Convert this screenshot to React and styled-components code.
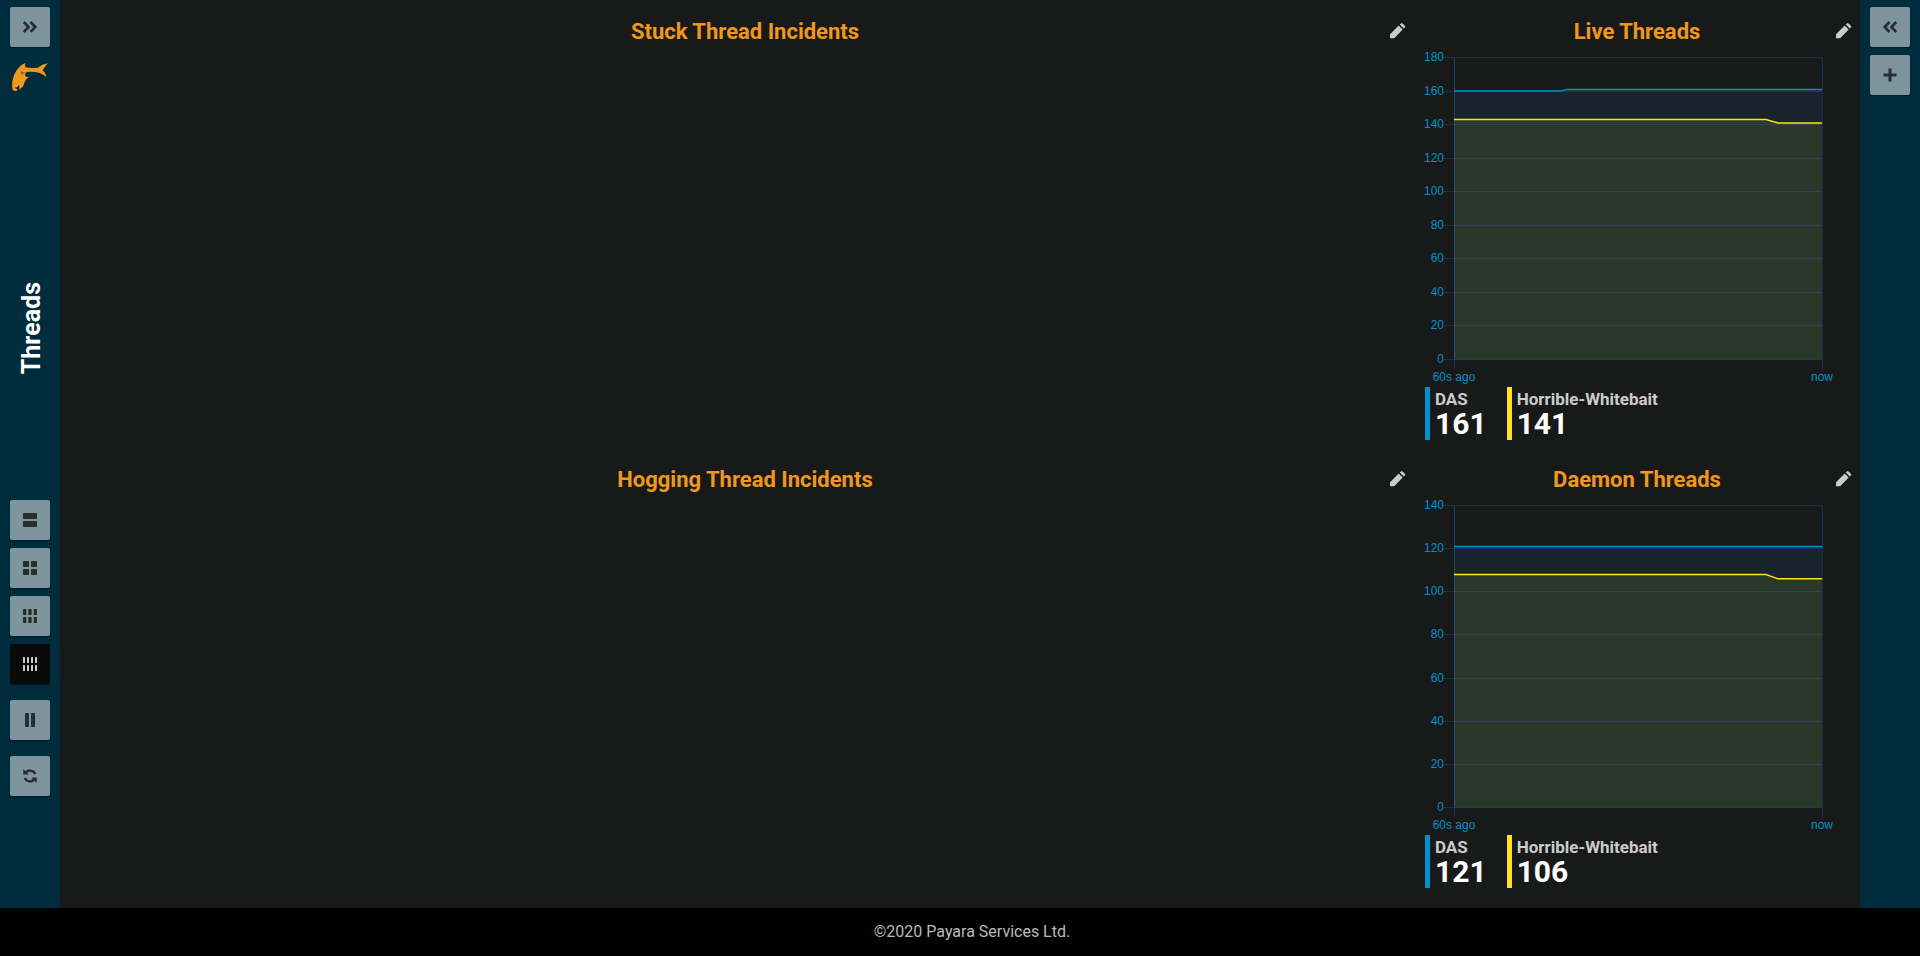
import React from 'react';
import styled, { createGlobalStyle } from 'styled-components';
import { FaAngleDoubleLeft, FaAngleDoubleRight } from 'react-icons/fa';

const Global = createGlobalStyle`
  *, *::before, *::after { box-sizing: border-box; }
  body { margin: 0; background: #000; font-family: Roboto, "Liberation Sans", sans-serif; }
`;

const Page = styled.div`
  display: flex;
  flex-direction: column;
  min-height: 100vh;
  background: #181a19;
`;

const Body = styled.div`
  flex: 1;
  display: flex;
  align-items: stretch;
`;

const Sidebar = styled.nav`
  flex: 0 0 60px;
  display: flex;
  flex-direction: column;
  align-items: center;
  gap: 8px;
  padding: 7px 0 112px;
  background: #002c3e;
`;

const Group = styled.div`
  display: flex;
  flex-direction: column;
  gap: 8px;
  margin-bottom: 8px;

  &:last-child { margin-bottom: 0; }
`;

const ToolButton = styled.button`
  display: flex;
  align-items: center;
  justify-content: center;
  width: 40px;
  height: 40px;
  padding: 0;
  border: 0;
  border-radius: 2px;
  color: ${(p) => (p.$active ? '#c8cccc' : '#272e30')};
  background: ${(p) => (p.$active ? '#090909' : '#7f959e')};
  box-shadow: 0 1px 1px rgba(0, 0, 0, 0.35);
  cursor: pointer;
`;

const Logo = styled.a`
  display: flex;
  justify-content: center;
  width: 40px;
  height: 40px;
  padding-top: 8px;
`;

const PageTitle = styled.h1`
  flex: 1;
  display: flex;
  align-items: center;
  justify-content: center;
  margin: 0;
  padding: 61px 0 0 3px;
  font-size: 25px;
  line-height: 30px;
  font-weight: 700;
  color: #fff;

  span { writing-mode: vertical-rl; transform: rotate(180deg); }
`;

const Board = styled.main`
  flex: 1;
  display: grid;
  grid-template-columns: 3fr 1fr;
  grid-template-rows: repeat(2, 1fr);
  padding: 0 0 12px 16px;
`;

const Widget = styled.section`
  display: flex;
  flex-direction: column;
  min-width: 0;
`;

const WidgetHeader = styled.header`
  display: grid;
  grid-template-columns: 24px 1fr 24px;
  align-items: center;
  height: 48px;
  padding-top: 16px;
`;

const WidgetTitle = styled.h2`
  grid-column: 2;
  margin: 0;
  text-align: center;
  font-size: 22px;
  line-height: 28px;
  font-weight: 700;
  color: #f0981b;
`;

const EditButton = styled.button`
  display: flex;
  width: 16px;
  height: 28px;
  padding: 5px 0 0;
  border: 0;
  color: #c9cbca;
  background: none;
  cursor: pointer;
`;

const Plot = styled.svg`
  display: block;
  width: 100%;
  font-family: "Liberation Sans", Arial, sans-serif;
  font-size: 12px;
  fill: #0090cd;
`;

const Legend = styled.ul`
  display: flex;
  gap: 20px;
  margin: 0;
  padding: 0 11px;
  list-style: none;
`;

const LegendItem = styled.li`
  padding: 0 0 0 5px;
  height: 53px;
  border-left: 5px solid ${(p) => p.$color};
`;

const SeriesName = styled.div`
  padding-top: 2px;
  font-size: 17px;
  line-height: 20px;
  font-weight: 700;
  color: #ccc;
`;

const SeriesValue = styled.div`
  font-size: 30px;
  line-height: 30px;
  font-weight: 700;
  color: #fff;
`;

const Footer = styled.footer`
  display: flex;
  align-items: center;
  justify-content: center;
  height: 48px;
  padding-left: 24px;
  font-size: 16px;
  line-height: 24px;
  color: #b9bbbb;
  background: #000;
`;

const BLUE = '#0090cd';
const YELLOW = '#ffe11c';

const LayoutIcon = ({ columns }) => {
  const gap = 2;
  const width = (14 - gap * (columns - 1)) / columns;
  return (
    <svg width="14" height="14" fill="currentColor" aria-hidden="true">
      {[0, 8].map((y) =>
        Array.from({ length: columns }, (_, i) => (
          <rect key={`${y}-${i}`} x={i * (width + gap)} y={y} width={width} height="6" rx="0.5" />
        ))
      )}
    </svg>
  );
};

const PauseIcon = () => (
  <svg width="14" height="14" fill="currentColor" aria-hidden="true">
    <path d="M2 0h4v14H2zM8 0h4v14H8z" />
  </svg>
);

const PlusIcon = () => (
  <svg width="14" height="14" fill="currentColor" aria-hidden="true">
    <path d="M5.5 .5h3v5h5v3h-5v5h-3v-5h-5v-3h5z" />
  </svg>
);

const RefreshIcon = () => (
  <svg width="14" height="14" viewBox="0 0 14 14" aria-hidden="true">
    <g fill="none" stroke="currentColor" strokeWidth="2.400">
      <path d="M2.600 4C4.600 .9 9.800.3 12.400 5" />
      <path d="M11.400 10C9.400 13.100 4.200 13.700 1.600 9" />
    </g>
    <path fill="currentColor" d="M.3 0v5.600h5.400zM13.700 14V8.400H8.300z" />
  </svg>
);

const PencilIcon = () => (
  <svg width="16" height="16" viewBox="0 0 16 16" fill="currentColor" aria-hidden="true">
    <path d="M0 11.300 8.700 2.600l4 4L4.200 15.300H0zM9.800 1.500 10.900.4q.8-.7 1.600 0l2.400 2.400q.7.800 0 1.600l-1.100 1.100z" />
  </svg>
);

const FishLogo = () => (
  <svg width="36" height="28" viewBox="0 0 36 28" fill="#f0981b" aria-hidden="true">
    <path d="M13.500 0C9.500 1.500 6.500 4.300 4.500 7.500 2 11 .6 15.500.2 20c-.2 2.700 0 5 .6 7l2.200 1c1.300 0 2.200-.5 2.600-1.500l-3-1.700 2.600-.6c1-.4 1.300-1.200 1.100-2.400 1.400 1.300 1.500 2.900.8 4.600 2.600-1 4.200-3 5-5.700.900-3.200 2.700-5.600 5.400-7l-1.800.4c-2 0-3-1.500-2.400-3.300.3-1 1-1.500 2.200-1.700 3.700-.7 7.300-.6 10.500.3 3.200.9 5.600 2.600 8.300 4.300-.3-2.700-1.500-4.700-3.700-6.300C31.800 5 33.700 2.700 36 .2c-4.200.6-7.700 2.200-10.200 4.500-3.700.5-7.600.2-12-.1-.9-1.400-.9-3-.3-4.600z" />
    <path d="M9 8.500l4 .8-2 2.300-1.800-.5z" fill="#75592a" />
    <circle cx="11" cy="10" r=".7" fill="#f0981b" />
  </svg>
);

const LEFT = 40;
const RIGHT = 408;
const TOP = 9.5;
const BOTTOM = 311.5;

function Chart({ max, series, label }) {
  const y = (v) => BOTTOM - (v / max) * (BOTTOM - TOP);
  const ticks = Array.from({ length: max / 20 + 1 }, (_, i) => i * 20);
  const points = (data) => data.map(([x, v]) => `${x},${y(v)}`).join(' ');
  return (
    <Plot viewBox="0 0 446 339" role="img" aria-label={label}>
      {series.map((s, i) => (
        <polygon
          key={s.name}
          points={`${LEFT},${BOTTOM} ${points(s.data)} ${RIGHT},${BOTTOM}`}
          fill={i === 0 ? '#17242b' : '#2b372b'}
        />
      ))}
      <g shapeRendering="crispEdges" stroke="#1c74d8" strokeOpacity="0.25">
        {ticks.map((t) => (
          <line key={t} x1={LEFT - 10} x2={RIGHT} y1={Math.floor(y(t)) + 0.5} y2={Math.floor(y(t)) + 0.5} />
        ))}
        <line x1={LEFT + 0.5} x2={LEFT + 0.5} y1={TOP} y2={BOTTOM + 10} />
        <line x1={LEFT + 0.5} x2={LEFT + 0.5} y1={TOP} y2={BOTTOM} />
        <line x1={RIGHT + 0.5} x2={RIGHT + 0.5} y1={TOP} y2={BOTTOM + 10} />
      </g>
      {series.map((s) => (
        <polyline key={s.name} points={points(s.data)} fill="none" stroke={s.color} strokeWidth="1.500" />
      ))}
      {ticks.map((t) => (
        <text key={t} x="30" y={Math.floor(y(t)) + 4} textAnchor="end">{t}</text>
      ))}
      <text x={LEFT} y="333" textAnchor="middle">60s ago</text>
      <text x={RIGHT} y="333" textAnchor="middle">now</text>
    </Plot>
  );
}

function Panel({ title, max, series }) {
  return (
    <Widget>
      <WidgetHeader>
        <WidgetTitle>{title}</WidgetTitle>
        <EditButton type="button" aria-label={`Edit ${title}`}><PencilIcon /></EditButton>
      </WidgetHeader>
      {series && (
        <>
          <Chart max={max} series={series} label={title} />
          <Legend>
            {series.map((s) => (
              <LegendItem key={s.name} $color={s.color}>
                <SeriesName>{s.name}</SeriesName>
                <SeriesValue>{s.value}</SeriesValue>
              </LegendItem>
            ))}
          </Legend>
        </>
      )}
    </Widget>
  );
}

const live = [
  { name: 'DAS', value: 161, color: BLUE, data: [[40, 160], [147, 160], [153, 161], [408, 161]] },
  { name: 'Horrible-Whitebait', value: 141, color: YELLOW, data: [[40, 143], [352, 143], [364, 141], [408, 141]] },
];

const daemon = [
  { name: 'DAS', value: 121, color: BLUE, data: [[40, 121], [408, 121]] },
  { name: 'Horrible-Whitebait', value: 106, color: YELLOW, data: [[40, 108], [352, 108], [364, 106], [408, 106]] },
];

export default function App() {
  return (
    <Page>
      <Global />
      <Body>
        <Sidebar aria-label="Page">
          <ToolButton type="button" aria-label="Expand navigation"><FaAngleDoubleRight size={18} /></ToolButton>
          <Logo href="#" aria-label="Payara home"><FishLogo /></Logo>
          <PageTitle><span>Threads</span></PageTitle>
          <Group>
            {[1, 2, 3, 4].map((n) => (
              <ToolButton key={n} type="button" $active={n === 4} aria-label={`${n} column layout`}>
                <LayoutIcon columns={n} />
              </ToolButton>
            ))}
          </Group>
          <Group>
            <ToolButton type="button" aria-label="Pause"><PauseIcon /></ToolButton>
          </Group>
          <Group>
            <ToolButton type="button" aria-label="Refresh"><RefreshIcon /></ToolButton>
          </Group>
        </Sidebar>
        <Board>
          <Panel title="Stuck Thread Incidents" />
          <Panel title="Live Threads" max={180} series={live} />
          <Panel title="Hogging Thread Incidents" />
          <Panel title="Daemon Threads" max={140} series={daemon} />
        </Board>
        <Sidebar aria-label="Settings">
          <ToolButton type="button" aria-label="Expand settings"><FaAngleDoubleLeft size={18} /></ToolButton>
          <ToolButton type="button" aria-label="Add widget"><PlusIcon /></ToolButton>
        </Sidebar>
      </Body>
      <Footer>©2020 Payara Services Ltd.</Footer>
    </Page>
  );
}
